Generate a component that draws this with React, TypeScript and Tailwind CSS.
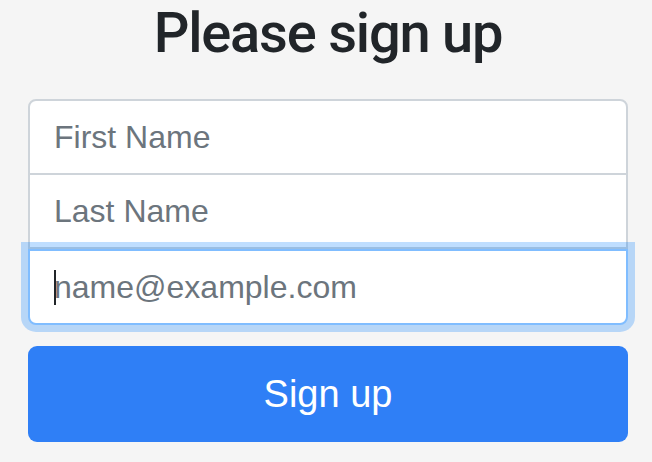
export default function App() {
  return (
    <div className="min-h-[462px] w-full bg-[#f5f5f5] font-['Liberation_Sans',Arial,sans-serif]">
      <form className="ml-[28px] w-[600px]">
        <h1 className="text-center text-[56px] font-medium leading-[67px] tracking-[-1.2px] text-[#212529] font-['Roboto',sans-serif]">
          Please sign up
        </h1>

        <div className="mt-[32px] flex flex-col">
          <input
            type="text"
            placeholder="First Name"
            className="relative -mb-[2px] block h-[76px] w-full rounded-t-[8px] border-2 border-[#ced4da] bg-white px-[24px] text-[32px] leading-[48px] text-[#212529] outline-none placeholder:text-[#6c757d]"
          />
          <input
            type="text"
            placeholder="Last Name"
            className="relative block h-[76px] w-full border-2 border-[#ced4da] bg-white px-[24px] text-[32px] leading-[48px] text-[#212529] outline-none placeholder:text-[#6c757d]"
          />
          <div className="relative z-10">
            <input
              type="email"
              placeholder="name@example.com"
              className="block h-[76px] w-full rounded-b-[8px] border-2 border-[#80bdff] bg-white px-[24px] text-[32px] leading-[48px] text-[#212529] shadow-[0_0_0_7px_rgba(0,123,255,0.25)] outline-none placeholder:text-[#6c757d]"
            />
            {/* text caret */}
            <span className="pointer-events-none absolute left-[26px] top-[21px] h-[35px] w-[2px] bg-[#212529]" />
          </div>
        </div>

        <button
          type="button"
          className="mt-[21px] block h-[96px] w-full rounded-[9px] bg-[#2f7ff6] text-[38px] leading-[57px] text-white"
        >
          Sign up
        </button>
      </form>
    </div>
  );
}
